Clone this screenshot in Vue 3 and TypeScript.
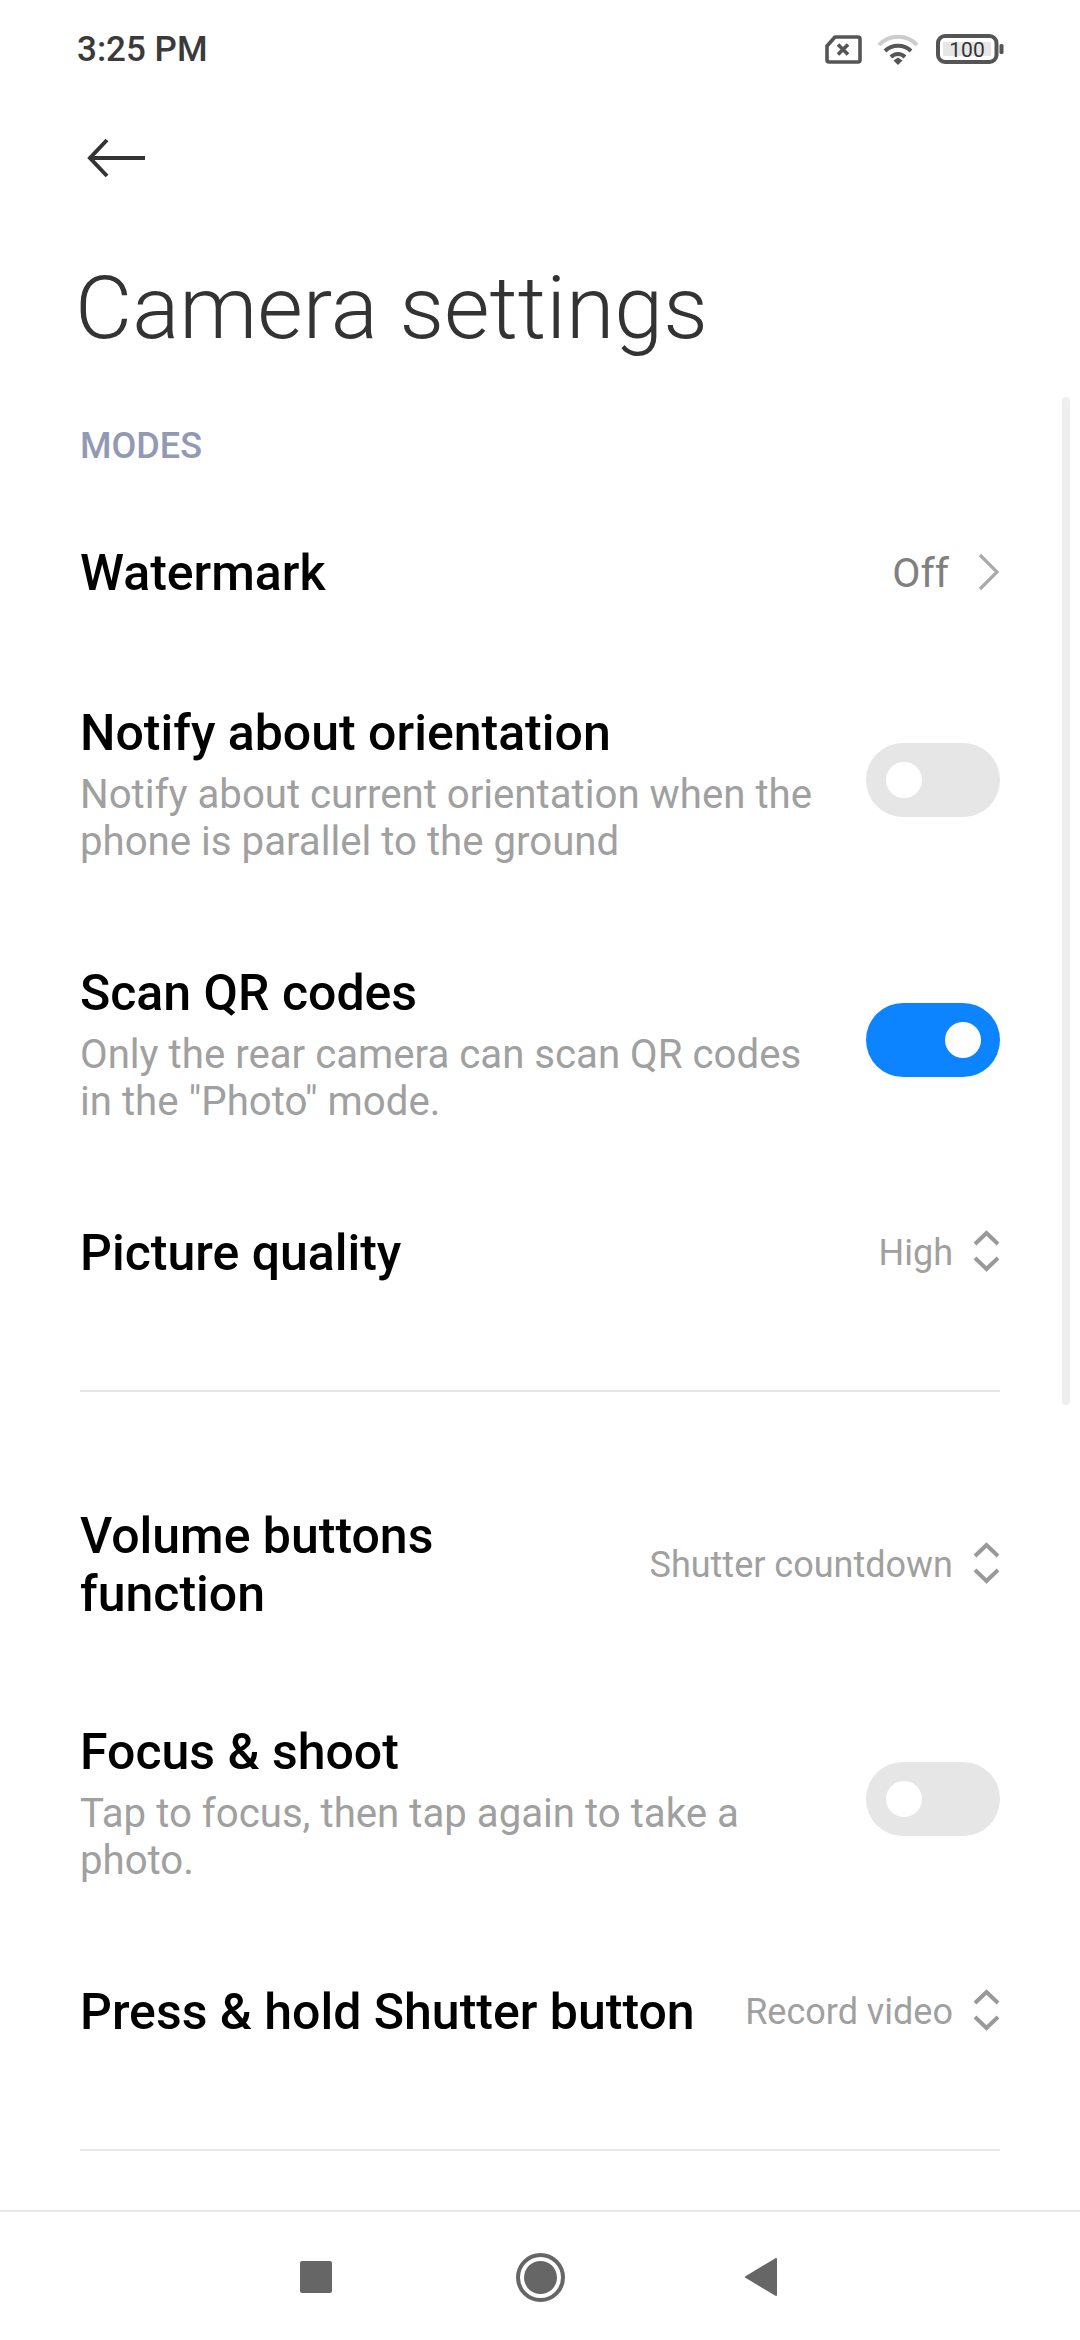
<script setup lang="ts">
type Row = {
  title: string[];
  sub?: string[];
  value?: string;
  kind?: "arrow" | "updown" | "on" | "off";
};

const modes: Row[] = [
  { title: ["Watermark"], value: "Off", kind: "arrow" },
  {
    title: ["Notify about orientation"],
    sub: ["Notify about current orientation when the", "phone is parallel to the ground"],
    kind: "off",
  },
  {
    title: ["Scan QR codes"],
    sub: ["Only the rear camera can scan QR codes", 'in the "Photo" mode.'],
    kind: "on",
  },
  { title: ["Picture quality"], value: "High", kind: "updown" },
];

const shutter: Row[] = [
  { title: ["Volume buttons", "function"], value: "Shutter countdown", kind: "updown" },
  {
    title: ["Focus & shoot"],
    sub: ["Tap to focus, then tap again to take a", "photo."],
    kind: "off",
  },
  { title: ["Press & hold Shutter button"], value: "Record video", kind: "updown" },
];

const groups = [modes, shutter];
</script>

<template>
  <div class="screen">
    <div class="status">
      <span class="time">3:25 PM</span>
      <div class="status-icons">
        <svg class="sim" width="37" height="29" viewBox="0 0 37 29">
          <path d="M10 2H33a2 2 0 0 1 2 2V25a2 2 0 0 1-2 2H4a2 2 0 0 1-2-2V11Z" fill="none" stroke="#555" stroke-width="3.6" stroke-linejoin="round" />
          <path d="M13 9.5l10 10M23 9.5l-10 10" stroke="#555" stroke-width="3.6" />
        </svg>
        <svg class="wifi" width="42" height="31" viewBox="0 0 42 31">
          <path d="M2 11C12 0 30 0 40 11" fill="none" stroke="#ccc" stroke-width="4" />
          <path d="M8 17C15 10 27 10 34 17" fill="none" stroke="#555" stroke-width="4" />
          <path d="M14 23C18 19 24 19 28 23" fill="none" stroke="#555" stroke-width="4" />
          <path d="M16.5 26.5L21 23.5L25.5 26.5L21 31Z" fill="#555" />
        </svg>
        <svg class="battery" width="68" height="30" viewBox="0 0 68 30">
          <rect x="2" y="2" width="58.5" height="26" rx="7" fill="none" stroke="#555" stroke-width="4" />
          <rect x="7" y="8" width="48" height="14" fill="#e6e6e6" />
          <rect x="63.5" y="10" width="4" height="10" rx="1.5" fill="#555" />
          <text x="31" y="23" text-anchor="middle" class="battery-text">100</text>
        </svg>
      </div>
    </div>

    <div class="content">
      <svg class="back" width="60" height="40" viewBox="0 0 60 40">
        <path d="M20 2L3 20L20 38M3 20H58" fill="none" stroke="#333" stroke-width="4" />
      </svg>
      <h1 class="title">Camera settings</h1>
      <div class="section">MODES</div>

      <template v-for="(group, g) in groups" :key="g">
        <div class="group">
          <div v-for="row in group" :key="row.title[0]" class="row" :class="{ tall: row.sub }">
            <div class="text">
              <div v-for="line in row.title" :key="line" class="row-title">{{ line }}</div>
              <div v-if="row.sub" class="row-subs">
                <div v-for="line in row.sub" :key="line" class="row-sub">{{ line }}</div>
              </div>
            </div>
            <div v-if="row.kind === 'on' || row.kind === 'off'" class="toggle" :class="row.kind">
              <span class="knob"></span>
            </div>
            <div v-else class="value-wrap">
              <span class="value" :class="{ dark: row.kind === 'arrow' }">{{ row.value }}</span>
              <svg v-if="row.kind === 'arrow'" class="arrow" width="22" height="38" viewBox="0 0 22 38">
                <path d="M2 2L19 19L2 36" fill="none" stroke="#aaa" stroke-width="3.2" />
              </svg>
              <svg v-else class="updown" width="27" height="42" viewBox="0 0 27 42">
                <path d="M2 14L13.5 3L25 14M2 28L13.5 39L25 28" fill="none" stroke="#999" stroke-width="4" />
              </svg>
            </div>
          </div>
        </div>
        <div class="divider"></div>
      </template>

      <div class="scrollbar"></div>
    </div>

    <div class="nav">
      <span class="nav-square"></span>
      <span class="nav-circle"><span></span></span>
      <svg class="nav-back" width="34" height="38" viewBox="0 0 34 38">
        <path d="M2 19L32 1V37Z" fill="#666" stroke="#666" stroke-width="2" stroke-linejoin="round" />
      </svg>
    </div>
  </div>
</template>

<style>
html,
body {
  margin: 0;
  background: #fff;
}
</style>

<style scoped>
.screen {
  width: 1080px;
  height: 2340px;
  display: flex;
  flex-direction: column;
  overflow: hidden;
  background: #fff;
  font-family: Roboto, "Noto Sans", sans-serif;
}

/* Status bar */
.status {
  height: 96px;
  flex-shrink: 0;
  display: flex;
  align-items: center;
  justify-content: space-between;
  padding: 2px 76px 0 77px;
  box-sizing: border-box;
}

.time {
  font-size: 35px;
  font-weight: 500;
  color: #3a3a3a;
}

.status-icons {
  display: flex;
  align-items: center;
}

.wifi {
  margin: 0 17px 0 15px;
}

.battery-text {
  font-family: Roboto, sans-serif;
  font-size: 21px;
  fill: #333;
}

/* Content */
.content {
  position: relative;
  flex: 1;
  min-height: 0;
  padding-top: 42px;
  box-sizing: border-box;
  overflow: hidden;
}

.back {
  display: block;
  margin-left: 87px;
}

.title {
  margin: 80px 0 0 75px;
  font-size: 88px;
  line-height: 100px;
  font-weight: 300;
  color: #333;
}

.section {
  margin: 68px 0 24px 80px;
  font-size: 36px;
  line-height: 40px;
  font-weight: 500;
  color: #9299b5;
}

.row {
  display: flex;
  align-items: center;
  justify-content: space-between;
  box-sizing: border-box;
  min-height: 160px;
  padding: 52px 80px 46px 80px;
}

.row.tall {
  height: 260px;
  padding-top: 0;
  padding-bottom: 0;
}

.row.tall .text {
  padding-top: 8px;
}

.row-title {
  font-size: 50px;
  line-height: 58px;
  font-weight: 500;
  color: #000;
}

.row-subs {
  margin-top: 9px;
}

.row-sub {
  font-size: 40.2px;
  line-height: 47px;
  color: #a0a0a0;
}

.value-wrap {
  display: flex;
  align-items: center;
  flex-shrink: 0;
}

.value {
  font-size: 36px;
  color: #a0a0a0;
}

.value.dark {
  font-size: 41px;
  color: #808080;
}

.arrow {
  margin-left: 29px;
  margin-top: -2px;
}

.updown {
  margin-left: 20px;
  margin-top: -4px;
}

.toggle {
  position: relative;
  width: 134px;
  height: 74px;
  border-radius: 37px;
  flex-shrink: 0;
}

.toggle.off {
  background: #e6e6e6;
}

.toggle.on {
  background: #0d84ff;
}

.knob {
  position: absolute;
  top: 19px;
  width: 36px;
  height: 36px;
  border-radius: 50%;
  background: #fff;
}

.toggle.off .knob {
  left: 20px;
}

.toggle.on .knob {
  right: 19px;
}

.divider {
  height: 2px;
  margin: 60px 80px 63px;
  background: #e6e6e6;
}

.scrollbar {
  position: absolute;
  top: 301px;
  left: 1062px;
  width: 8px;
  height: 1008px;
  background: #eee;
  border-radius: 4px;
}

/* Navigation bar */
.nav {
  position: relative;
  height: 130px;
  flex-shrink: 0;
  border-top: 2px solid #e8e8e8;
  box-sizing: border-box;
  background: #fff;
}

.nav-square {
  position: absolute;
  left: 300px;
  top: 49px;
  width: 32px;
  height: 32px;
  border-radius: 2px;
  background: #666;
}

.nav-circle {
  position: absolute;
  left: 516px;
  top: 41px;
  width: 49px;
  height: 49px;
  box-sizing: border-box;
  border: 4px solid #666;
  border-radius: 50%;
  display: flex;
  align-items: center;
  justify-content: center;
}

.nav-circle span {
  width: 33px;
  height: 33px;
  border-radius: 50%;
  background: #666;
}

.nav-back {
  position: absolute;
  left: 744px;
  top: 46px;
}
</style>
